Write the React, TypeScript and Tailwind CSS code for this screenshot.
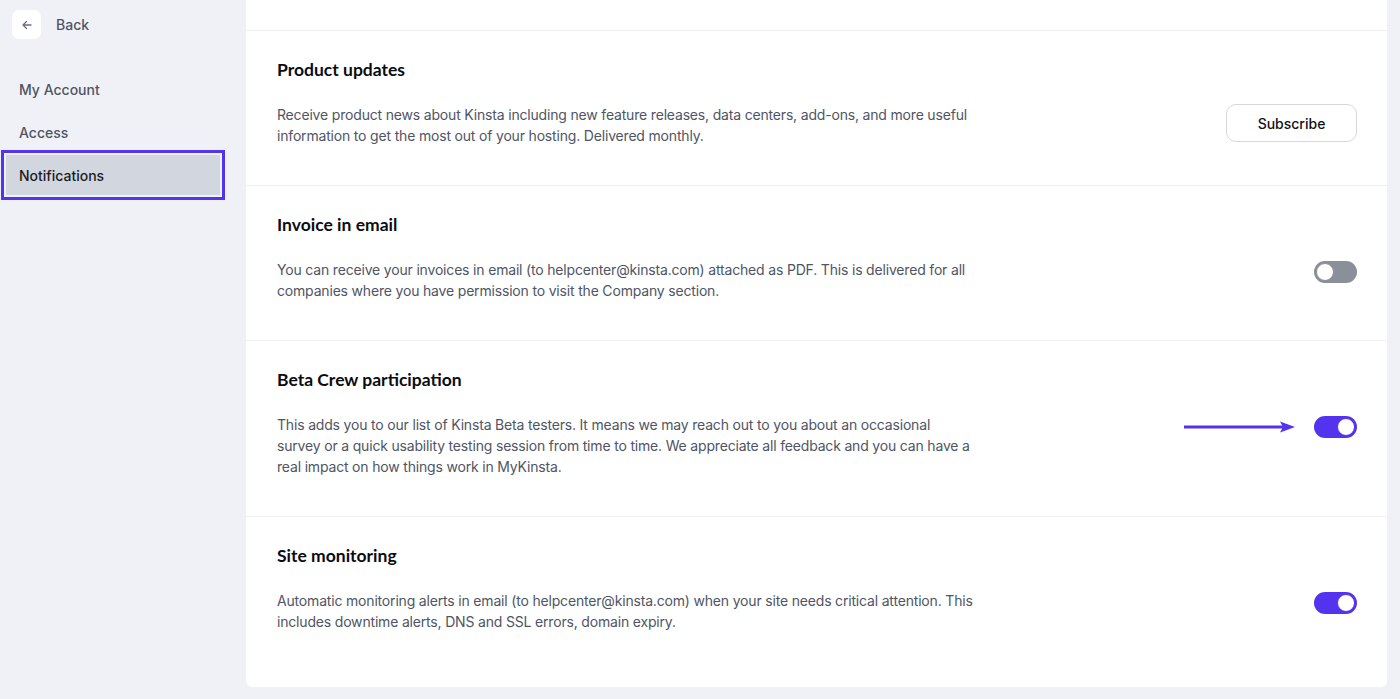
import React from "react";

type Section = {
  title: string;
  text: string;
  control: "subscribe" | "off" | "on";
  arrow?: boolean;
};

const sections: Section[] = [
  {
    title: "Product updates",
    text: "Receive product news about Kinsta including new feature releases, data centers, add-ons, and more useful information to get the most out of your hosting. Delivered monthly.",
    control: "subscribe",
  },
  {
    title: "Invoice in email",
    text: "You can receive your invoices in email (to helpcenter@kinsta.com) attached as PDF. This is delivered for all companies where you have permission to visit the Company section.",
    control: "off",
  },
  {
    title: "Beta Crew participation",
    text: "This adds you to our list of Kinsta Beta testers. It means we may reach out to you about an occasional survey or a quick usability testing session from time to time. We appreciate all feedback and you can have a real impact on how things work in MyKinsta.",
    control: "on",
    arrow: true,
  },
  {
    title: "Site monitoring",
    text: "Automatic monitoring alerts in email (to helpcenter@kinsta.com) when your site needs critical attention. This includes downtime alerts, DNS and SSL errors, domain expiry.",
    control: "on",
  },
];

const Toggle: React.FC<{ on: boolean }> = ({ on }) => (
  <div
    className={
      on
        ? "w-[43px] h-[22px] rounded-full bg-[#5333ed] flex items-center justify-end p-[2px]"
        : "w-[43px] h-[22px] rounded-full bg-[#8b8f99] flex items-center justify-start p-[2px]"
    }
  >
    <div
      className={
        on
          ? "w-[18px] h-[18px] rounded-full bg-white border border-[#5333ed]"
          : "w-[18px] h-[18px] rounded-full bg-white border border-[#8b8f99]"
      }
    />
  </div>
);

const App: React.FC = () => {
  return (
    <div className="flex w-[1400px] h-[699px] bg-[#f0f1f7] overflow-hidden font-['Inter',sans-serif]">
      {/* Sidebar */}
      <aside className="w-[246px] shrink-0 flex flex-col">
        <div className="flex items-center gap-[15px] pl-3 pt-[10px]">
          <div className="w-[29px] h-[29px] rounded-[7px] bg-white flex items-center justify-center">
            <svg width="12" height="12" viewBox="0 0 12 12" fill="none" stroke="#6b7080" strokeWidth="1.3" strokeLinecap="round" strokeLinejoin="round">
              <path d="M10 6H2M5.5 2.5 2 6l3.5 3.5" />
            </svg>
          </div>
          <span className="text-[14px] font-medium text-[#4f5565]">Back</span>
        </div>
        <nav className="mt-[29px] flex flex-col">
          <div className="pl-[19px] h-[43px] flex items-center text-[14px] font-medium text-[#4f5565]">My Account</div>
          <div className="pl-[19px] h-[43px] flex items-center text-[14px] font-medium text-[#4f5565]">Access</div>
          <div className="ml-[1px] w-[224px] h-[50px] border-[3px] border-[#5333ed] p-[2px] -mt-[4px]">
            <div className="h-full bg-[#d2d6df] flex items-center pl-[13px] text-[14px] font-medium text-[#1a1c24]">
              Notifications
            </div>
          </div>
        </nav>
      </aside>

      {/* Main card */}
      <main className="w-[1141px] h-[687px] bg-white rounded-b-[6px] flex flex-col">
        <div className="h-[31px] border-b border-[#eff0f5] shrink-0" />
        {sections.map((s, i) => (
          <section
            key={s.title}
            className={
              i === sections.length - 1
                ? "relative pl-[31px] pr-[30px] pt-[27px] pb-[38px]"
                : "relative pl-[31px] pr-[30px] pt-[27px] pb-[39px] border-b border-[#eff0f5]"
            }
          >
            <h2 className="font-['Lato',sans-serif] text-[17.5px] leading-6 font-bold text-[#0b0c10] mb-[22px]">
              {s.title}
            </h2>
            <div className="flex items-start justify-between">
              <p className="w-[698px] text-[14px] leading-[21px] tracking-[-0.18px] text-[#4f5565]">{s.text}</p>
              <div className="relative flex items-center">
                {s.arrow && (
                  <svg className="absolute right-[61px] top-[5px]" width="112" height="16" viewBox="0 0 112 16">
                    <path d="M0 8H100" stroke="#5333ed" strokeWidth="3" />
                    <path d="M96 2.5 111 8 96 13.5 99 8Z" fill="#5333ed" />
                  </svg>
                )}
                {s.control === "subscribe" ? (
                  <button className="w-[131px] h-[38px] rounded-[10px] border border-[#d5d8e1] bg-white text-[14px] font-medium text-[#111318]">
                    Subscribe
                  </button>
                ) : (
                  <div className="mt-[2px]">
                    <Toggle on={s.control === "on"} />
                  </div>
                )}
              </div>
            </div>
          </section>
        ))}
      </main>
    </div>
  );
};

export default App;
